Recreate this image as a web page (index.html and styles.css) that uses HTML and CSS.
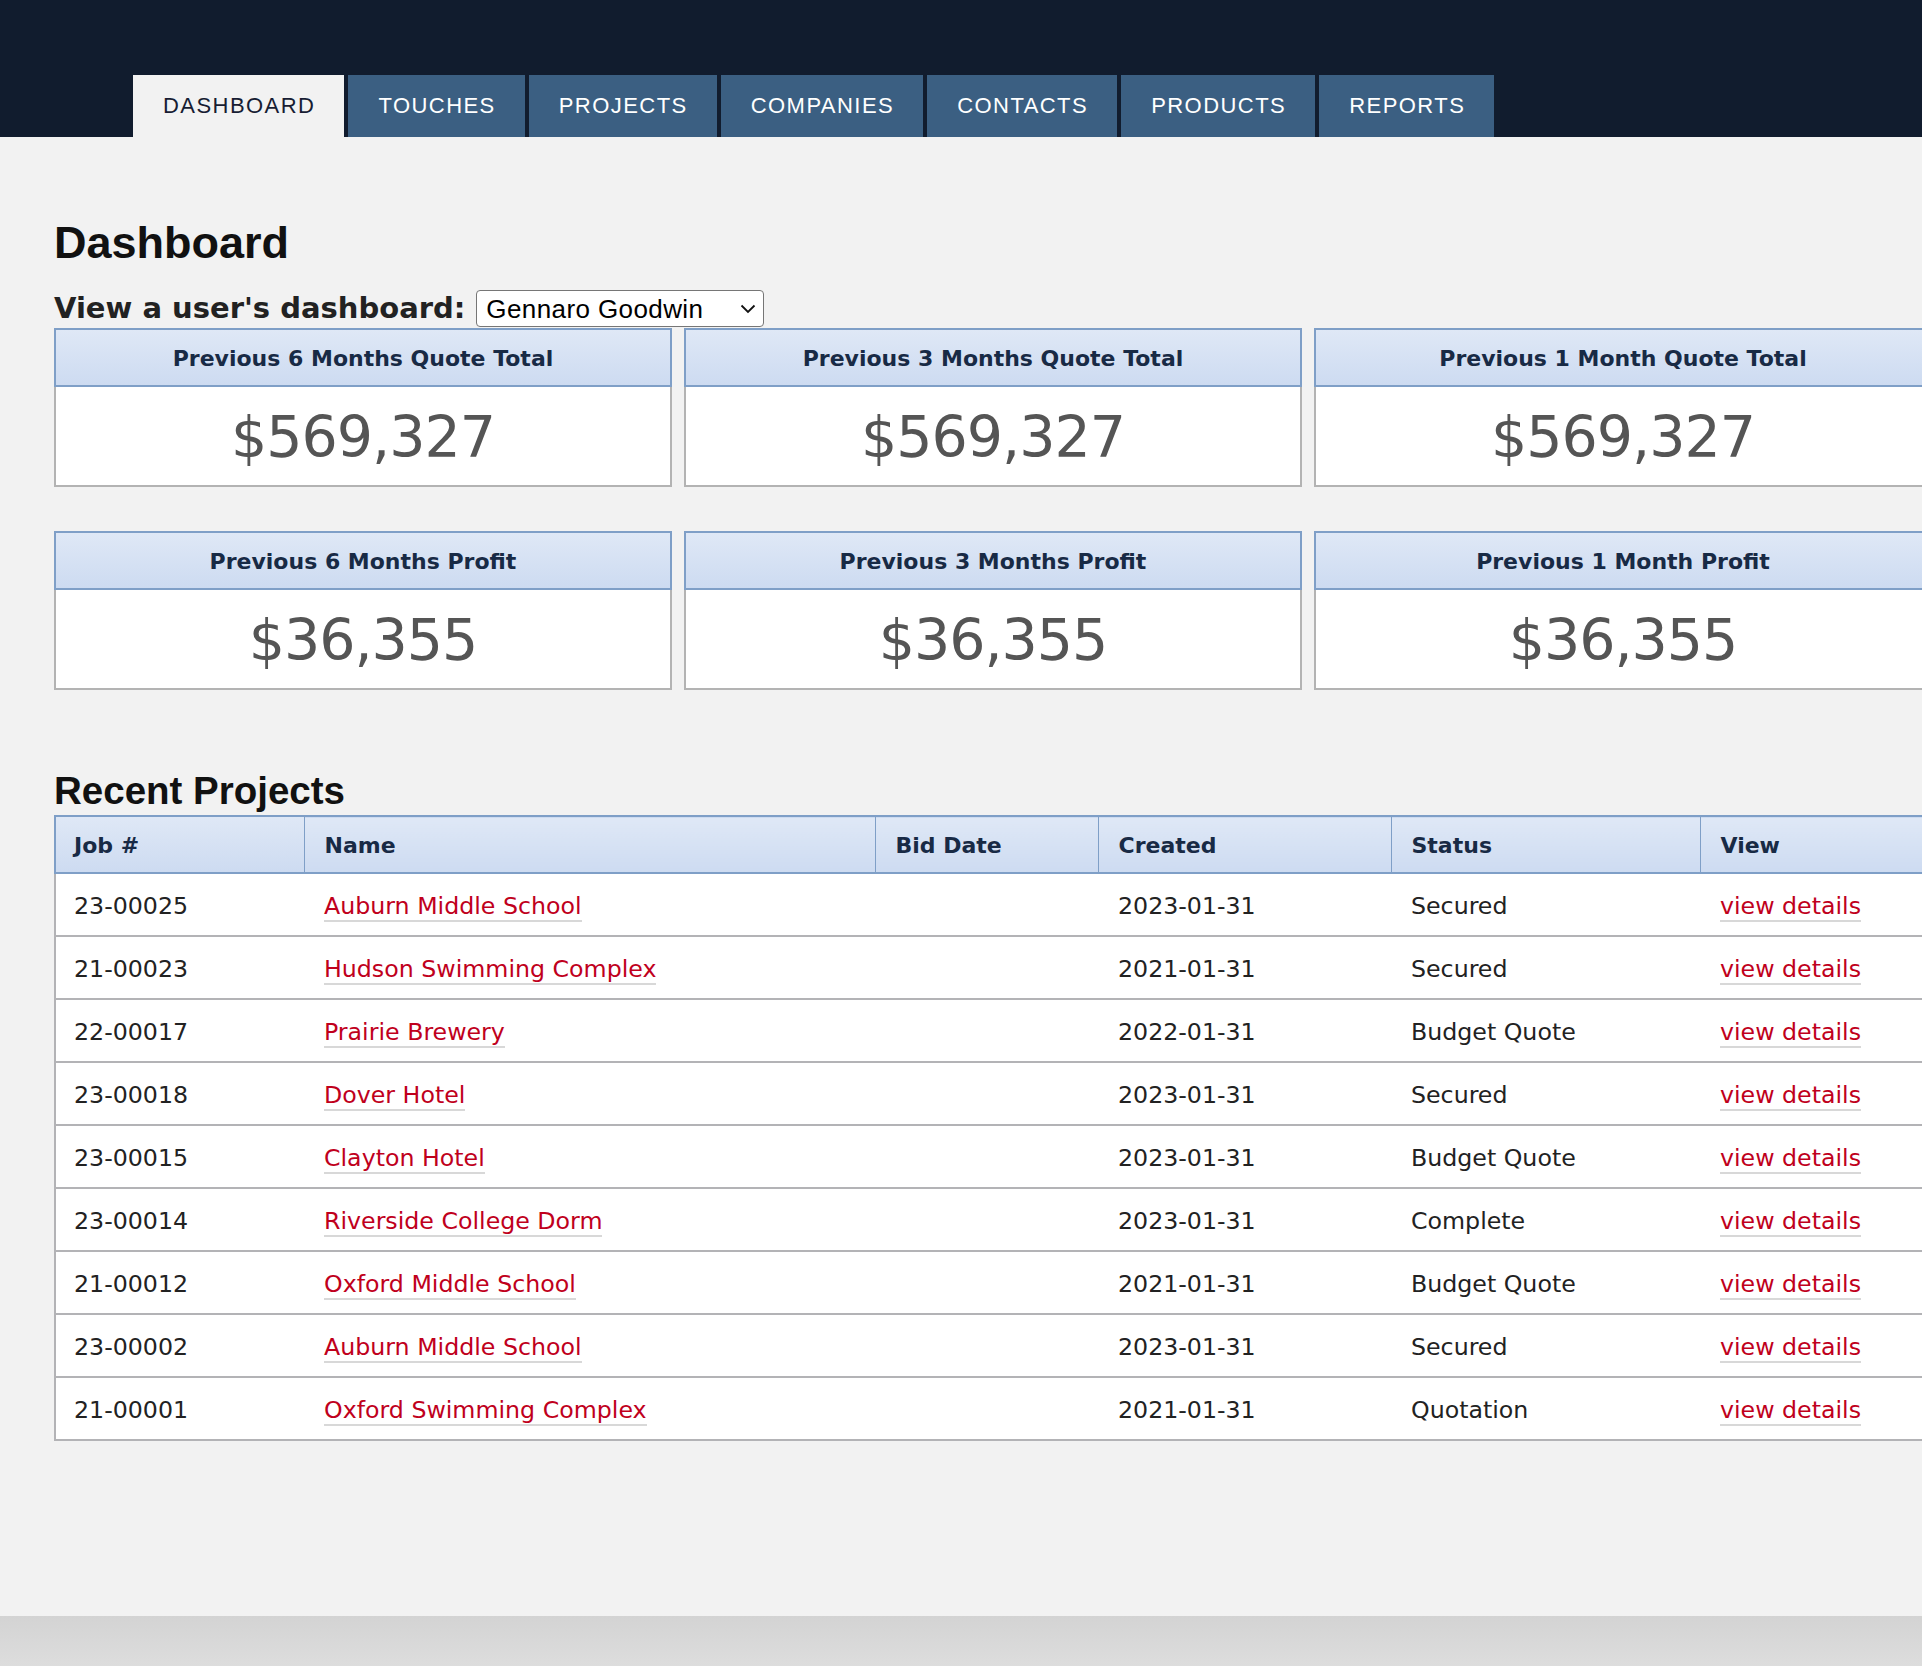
FILE: index.html
```html
<!DOCTYPE html>
<html lang="en">
<head>
<meta charset="utf-8">
<title>Dashboard</title>
<link rel="stylesheet" href="styles.css">
</head>
<body>
<header class="topbar">
  <nav class="tabs">
    <a class="tab tab-active" href="#">Dashboard</a>
    <a class="tab" href="#">Touches</a>
    <a class="tab" href="#">Projects</a>
    <a class="tab" href="#">Companies</a>
    <a class="tab" href="#">Contacts</a>
    <a class="tab" href="#">Products</a>
    <a class="tab" href="#">Reports</a>
  </nav>
</header>
<main class="content">
  <h1 class="page-title">Dashboard</h1>
  <div class="user-picker">
    <label class="user-label" for="user">View a user's dashboard:</label>
    <div class="select-wrap">
      <select id="user" class="user-select">
        <option>Gennaro Goodwin</option>
      </select>
      <svg class="select-chevron" width="16" height="10" viewBox="0 0 16 10"><path d="M1.5 1.5 L8 8 L14.5 1.5" fill="none" stroke="#111" stroke-width="1.8"/></svg>
    </div>
  </div>
  <div class="stats">
    <div class="card"><div class="card-head">Previous 6 Months Quote Total</div><div class="card-value">$569,327</div></div>
    <div class="card"><div class="card-head">Previous 3 Months Quote Total</div><div class="card-value">$569,327</div></div>
    <div class="card"><div class="card-head">Previous 1 Month Quote Total</div><div class="card-value">$569,327</div></div>
    <div class="card"><div class="card-head">Previous 6 Months Profit</div><div class="card-value">$36,355</div></div>
    <div class="card"><div class="card-head">Previous 3 Months Profit</div><div class="card-value">$36,355</div></div>
    <div class="card"><div class="card-head">Previous 1 Month Profit</div><div class="card-value">$36,355</div></div>
  </div>
  <h2 class="section-title">Recent Projects</h2>
  <table class="projects">
    <colgroup>
      <col class="c-job"><col class="c-name"><col class="c-bid"><col class="c-created"><col class="c-status"><col class="c-view">
    </colgroup>
    <thead>
      <tr><th>Job #</th><th>Name</th><th>Bid Date</th><th>Created</th><th>Status</th><th>View</th></tr>
    </thead>
    <tbody>
      <tr><td>23-00025</td><td><a href="#">Auburn Middle School</a></td><td></td><td>2023-01-31</td><td>Secured</td><td><a href="#">view details</a></td></tr>
      <tr><td>21-00023</td><td><a href="#">Hudson Swimming Complex</a></td><td></td><td>2021-01-31</td><td>Secured</td><td><a href="#">view details</a></td></tr>
      <tr><td>22-00017</td><td><a href="#">Prairie Brewery</a></td><td></td><td>2022-01-31</td><td>Budget Quote</td><td><a href="#">view details</a></td></tr>
      <tr><td>23-00018</td><td><a href="#">Dover Hotel</a></td><td></td><td>2023-01-31</td><td>Secured</td><td><a href="#">view details</a></td></tr>
      <tr><td>23-00015</td><td><a href="#">Clayton Hotel</a></td><td></td><td>2023-01-31</td><td>Budget Quote</td><td><a href="#">view details</a></td></tr>
      <tr><td>23-00014</td><td><a href="#">Riverside College Dorm</a></td><td></td><td>2023-01-31</td><td>Complete</td><td><a href="#">view details</a></td></tr>
      <tr><td>21-00012</td><td><a href="#">Oxford Middle School</a></td><td></td><td>2021-01-31</td><td>Budget Quote</td><td><a href="#">view details</a></td></tr>
      <tr><td>23-00002</td><td><a href="#">Auburn Middle School</a></td><td></td><td>2023-01-31</td><td>Secured</td><td><a href="#">view details</a></td></tr>
      <tr><td>21-00001</td><td><a href="#">Oxford Swimming Complex</a></td><td></td><td>2021-01-31</td><td>Quotation</td><td><a href="#">view details</a></td></tr>
    </tbody>
  </table>
</main>
<footer class="footer"></footer>
</body>
</html>
```

FILE: styles.css
```css
html {
  overflow: hidden;
}
body {
  margin: 0;
  background: #f2f2f2;
  font-family: "DejaVu Sans", sans-serif;
  color: #222;
}
.topbar {
  height: 137px;
  background: #111c2e;
  display: flex;
  align-items: flex-end;
  padding-left: 133px;
  box-sizing: border-box;
}
.tabs {
  display: flex;
  gap: 4px;
}
.tab {
  display: flex;
  align-items: center;
  height: 62px;
  padding: 0 29px 0 30px;
  background: #3b5f82;
  color: #fff;
  text-decoration: none;
  text-transform: uppercase;
  font-family: "Liberation Sans", Arial, sans-serif;
  font-size: 22px;
  letter-spacing: 1.45px;
}
.tab-active {
  background: #f2f2f2;
  color: #171d33;
}
.content {
  padding: 84px 0 175px 54px;
  width: 1878px;
}
.page-title {
  margin: 0;
  font-family: "Liberation Sans", Arial, sans-serif;
  font-size: 45px;
  line-height: 44px;
  font-weight: bold;
  color: #111;
}
.user-picker {
  display: flex;
  align-items: center;
  gap: 11px;
  margin-top: 25px;
  margin-bottom: 1px;
  height: 37px;
}
.user-label {
  font-weight: bold;
  font-size: 29px;
  line-height: 37px;
  color: #222;
}
.select-wrap {
  position: relative;
}
.user-select {
  appearance: none;
  -webkit-appearance: none;
  width: 288px;
  height: 37px;
  box-sizing: border-box;
  border: 1px solid #767676;
  border-radius: 4px;
  background: #fff;
  padding: 0 0 0 9px;
  font-family: "Liberation Sans", Arial, sans-serif;
  font-size: 26px;
  letter-spacing: 0.4px;
  color: #000;
}
.select-chevron {
  position: absolute;
  right: 8px;
  top: 14px;
  pointer-events: none;
}
.stats {
  display: grid;
  grid-template-columns: repeat(3, 618px);
  column-gap: 12px;
  row-gap: 44px;
}
.card {
  display: flex;
  flex-direction: column;
}
.card-head {
  height: 59px;
  box-sizing: border-box;
  border: 2px solid #7f9fc7;
  background: linear-gradient(#dfe8f6, #cddbf1);
  display: flex;
  align-items: center;
  justify-content: center;
  padding-top: 2px;
  font-weight: bold;
  font-size: 22px;
  color: #182a45;
}
.card-value {
  height: 100px;
  box-sizing: border-box;
  border: 2px solid #b3b3b3;
  border-top: none;
  background: #fff;
  display: flex;
  align-items: center;
  justify-content: center;
  padding-top: 2px;
  font-size: 57px;
  letter-spacing: -1px;
  color: #555;
}
.section-title {
  margin: 82px 0 5px;
  font-family: "Liberation Sans", Arial, sans-serif;
  font-size: 38.5px;
  line-height: 38px;
  font-weight: bold;
  color: #111;
}
.projects {
  width: 1878px;
  table-layout: fixed;
  border-collapse: collapse;
  background: #fff;
}
.c-job { width: 249px; }
.c-name { width: 571px; }
.c-bid { width: 223px; }
.c-created { width: 293px; }
.c-status { width: 309px; }
.c-view { width: 233px; }
.projects th {
  height: 53px;
  padding: 2px 0 0 20px;
  text-align: left;
  font-size: 22px;
  font-weight: bold;
  color: #182a45;
  background: linear-gradient(#dfe8f6, #cddbf1);
  border-top: 2px solid #7f9fc7;
  border-bottom: 2px solid #7f9fc7;
  border-left: 1px solid #7f9fc7;
}
.projects th:first-child {
  border-left: 2px solid #7f9fc7;
  padding-left: 18px;
}
.projects td {
  height: 58px;
  padding: 3px 0 0 20px;
  font-size: 23.7px;
  color: #222;
  border-bottom: 2px solid #b3b3b6;
  white-space: nowrap;
}
.projects td:first-child {
  border-left: 2px solid #b3b3b6;
  padding-left: 18px;
}
.projects a {
  color: #c0001c;
  text-decoration: none;
  border-bottom: 2px solid #d8d8d8;
}
.footer {
  height: 50px;
  background: linear-gradient(#d3d3d3, #dddddd);
}
```
